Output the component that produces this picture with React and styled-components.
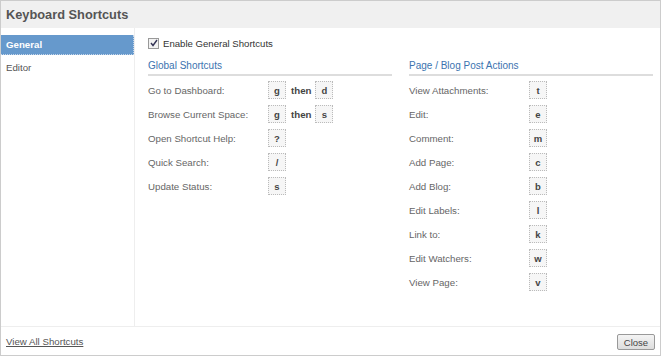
import React from 'react';
import styled, { createGlobalStyle } from 'styled-components';

const GlobalStyle = createGlobalStyle`
  html, body {
    margin: 0;
    padding: 0;
    background: #fff;
  }
  body {
    font-family: "Liberation Sans", Arial, sans-serif;
    font-size: 9.7px;
    color: #555;
  }
`;

const Dialog = styled.div`
  width: 661px;
  height: 356px;
  box-sizing: border-box;
  border: 1px solid #ccc;
  display: flex;
  flex-direction: column;
  background: #fff;
`;

const Header = styled.div`
  height: 27px;
  background: #f0f0f0;
  display: flex;
  align-items: center;
  padding-left: 5px;
  font-size: 12.8px;
  font-weight: bold;
  color: #555;
  flex-shrink: 0;
`;

const Body = styled.div`
  flex: 1;
  display: flex;
  min-height: 0;
`;

const Sidebar = styled.ul`
  list-style: none;
  margin: 0;
  padding: 7px 0 0;
  width: 133px;
  border-right: 1px solid #eee;
  flex-shrink: 0;
`;

const NavItem = styled.li`
  height: 20px;
  margin-bottom: 2px;
  padding-left: 5px;
  display: flex;
  align-items: center;
  font-size: 9.7px;
  box-sizing: border-box;
  font-weight: ${p => (p.active ? 'bold' : 'normal')};
  color: ${p => (p.active ? '#fff' : '#555')};
  background: ${p => (p.active ? '#6699cc' : 'transparent')};
  border-right: ${p => (p.active ? '1px dotted #c5d6ea' : 'none')};
  border-bottom: ${p => (p.active ? '1px dotted #c5d6ea' : 'none')};
`;

const Content = styled.div`
  flex: 1;
  padding: 8px 7px 0 13px;
`;

const Enable = styled.label`
  display: flex;
  align-items: center;
  gap: 3px;
  height: 14px;
  font-size: 9.6px;
  color: #333;
`;

const Check = styled.span`
  width: 9px;
  height: 9px;
  border: 1px solid #999;
  background: #f2f2f2;
  display: inline-flex;
  align-items: center;
  justify-content: center;
  margin-right: 1px;
`;

const Columns = styled.div`
  display: grid;
  grid-template-columns: 244px 244px;
  column-gap: 17px;
  margin-top: 9px;
`;

const Section = styled.div``;

const SectionTitle = styled.div`
  color: #3b73af;
  font-size: 10px;
  padding-bottom: 1px;
  border-bottom: 2px solid #ddd;
  line-height: 14px;
`;

const Rows = styled.div`
  padding-top: 2px;
`;

const Row = styled.div`
  display: flex;
  align-items: center;
  height: 24px;
`;

const Label = styled.span`
  width: 120px;
  flex-shrink: 0;
  color: #666;
`;

const Key = styled.span`
  width: 18px;
  height: 18px;
  box-sizing: border-box;
  border: 1px dotted #bbb;
  background: #f6f6f6;
  display: inline-flex;
  align-items: center;
  justify-content: center;
  font-weight: bold;
  color: #444;
  font-size: 9.5px;
`;

const Then = styled.span`
  font-weight: bold;
  color: #444;
  margin: 0 4px 0 5px;
`;

const Footer = styled.div`
  height: 28px;
  border-top: 1px solid #eee;
  display: flex;
  align-items: center;
  justify-content: space-between;
  padding: 0 5px 0 5px;
  flex-shrink: 0;
`;

const Link = styled.a`
  color: #555;
  text-decoration: underline;
  font-size: 9.7px;
`;

const Button = styled.button`
  font-family: "Liberation Sans", Arial, sans-serif;
  font-size: 9.5px;
  color: #444;
  width: 38px;
  height: 16px;
  padding: 0;
  border: 1px solid #999;
  border-radius: 2px;
  background: linear-gradient(#f4f4f4, #ddd);
  margin-top: 2px;
`;

const globalShortcuts = [
  ['Go to Dashboard:', ['g', 'd']],
  ['Browse Current Space:', ['g', 's']],
  ['Open Shortcut Help:', ['?']],
  ['Quick Search:', ['/']],
  ['Update Status:', ['s']],
];

const pageShortcuts = [
  ['View Attachments:', ['t']],
  ['Edit:', ['e']],
  ['Comment:', ['m']],
  ['Add Page:', ['c']],
  ['Add Blog:', ['b']],
  ['Edit Labels:', ['l']],
  ['Link to:', ['k']],
  ['Edit Watchers:', ['w']],
  ['View Page:', ['v']],
];

const ShortcutRow = ({ label, keys }) => (
  <Row>
    <Label>{label}</Label>
    {keys.map((k, i) => (
      <React.Fragment key={i}>
        {i > 0 && <Then>then</Then>}
        <Key>{k}</Key>
      </React.Fragment>
    ))}
  </Row>
);

const App = () => (
  <>
    <GlobalStyle />
    <Dialog>
      <Header>Keyboard Shortcuts</Header>
      <Body>
        <Sidebar>
          <NavItem active>General</NavItem>
          <NavItem>Editor</NavItem>
        </Sidebar>
        <Content>
          <Enable>
            <Check>
              <svg width="8" height="8" viewBox="0 0 8 8">
                <path d="M1 4 L3 6.5 L7 1" fill="none" stroke="#335" strokeWidth="1.4" />
              </svg>
            </Check>
            Enable General Shortcuts
          </Enable>
          <Columns>
            <Section>
              <SectionTitle>Global Shortcuts</SectionTitle>
              <Rows>
                {globalShortcuts.map(([l, k]) => (
                  <ShortcutRow key={l} label={l} keys={k} />
                ))}
              </Rows>
            </Section>
            <Section>
              <SectionTitle>Page / Blog Post Actions</SectionTitle>
              <Rows>
                {pageShortcuts.map(([l, k]) => (
                  <ShortcutRow key={l} label={l} keys={k} />
                ))}
              </Rows>
            </Section>
          </Columns>
        </Content>
      </Body>
      <Footer>
        <Link href="#">View All Shortcuts</Link>
        <Button>Close</Button>
      </Footer>
    </Dialog>
  </>
);

export default App;
